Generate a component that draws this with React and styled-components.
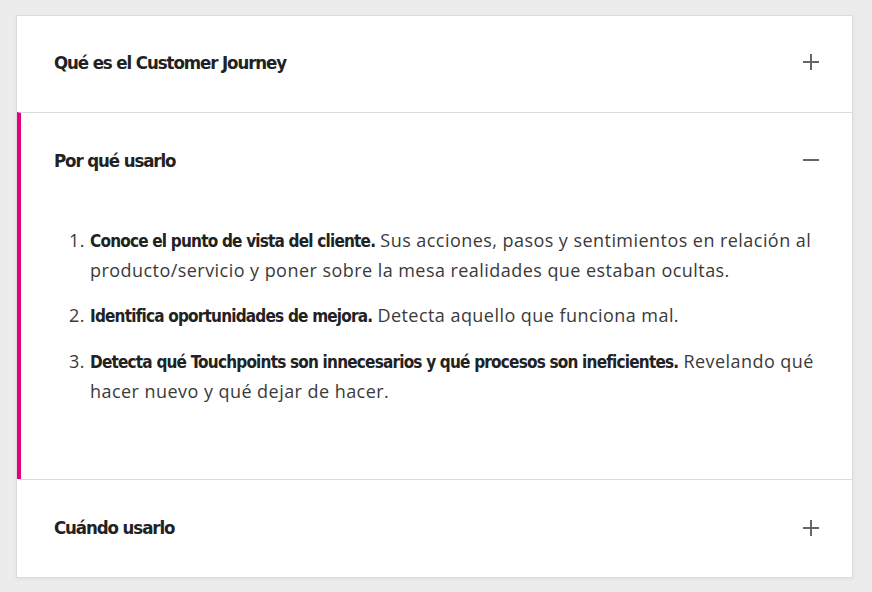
import React, { useState } from 'react';
import styled, { createGlobalStyle } from 'styled-components';

const GlobalStyle = createGlobalStyle`
  html, body {
    margin: 0;
    padding: 0;
    background: #ececec;
  }
  body {
    font-family: "Open Sans", Lato, sans-serif;
  }
`;

const condensed = `"DejaVu Sans Condensed", "Liberation Sans", sans-serif`;

const Page = styled.div`
  padding: 15px 19px 14px 16px;
`;

const Card = styled.div`
  background: #fff;
  border: 1px solid #dcdcdc;
  box-shadow: 0 1px 4px rgba(0, 0, 0, 0.06);
`;

const Item = styled.section`
  border-top: ${(p) => (p.first ? 'none' : '1px solid #dcdcdc')};
  border-left: 4px solid ${(p) => (p.open ? '#e6007e' : 'transparent')};
`;

const Header = styled.button`
  display: flex;
  align-items: center;
  justify-content: space-between;
  width: 100%;
  height: ${(p) => p.height}px;
  padding: 0 32px ${(p) => p.lift}px 33px;
  border: none;
  background: none;
  cursor: pointer;
  text-align: left;
`;

const Title = styled.h3`
  margin: 0;
  font-family: ${condensed};
  font-weight: 700;
  font-size: 18.5px;
  color: #222;
  letter-spacing: -1.1px;
`;

const Icon = styled.svg`
  width: 18px;
  height: 18px;
  flex: none;
`;

const Body = styled.div`
  padding: 19px 32px 73px 33px;
`;

const List = styled.ol`
  margin: 0;
  padding-left: 36px;
  color: #3a3a3a;
  font-size: 18px;
  font-weight: 400;
  letter-spacing: 0.45px;
  line-height: 29px;
`;

const Entry = styled.li`
  margin-bottom: 16px;
  &:last-child {
    margin-bottom: 0;
  }
  strong {
    font-family: ${condensed};
    font-weight: 700;
    font-size: 17px;
    letter-spacing: -0.8px;
    color: #222;
  }
`;

const PlusMinus = ({ open }) => (
  <Icon viewBox="0 0 18 18">
    <rect x="1" y="8" width="16" height="2" fill="#666" />
    {!open && <rect x="8" y="1" width="2" height="16" fill="#666" />}
  </Icon>
);

const items = [
  { title: 'Qué es el Customer Journey', height: 96, lift: 4 },
  { title: 'Por qué usarlo', height: 94, lift: 0 },
  { title: 'Cuándo usarlo', height: 97, lift: 2 },
];

export default function App() {
  const [open, setOpen] = useState(1);
  return (
    <Page>
      <GlobalStyle />
      <Card>
        {items.map((it, i) => (
          <Item key={it.title} first={i === 0} open={open === i}>
            <Header height={it.height} lift={it.lift} onClick={() => setOpen(open === i ? -1 : i)}>
              <Title>{it.title}</Title>
              <PlusMinus open={open === i} />
            </Header>
            {open === i && i === 1 && (
              <Body>
                <List>
                  <Entry>
                    <strong>Conoce el punto de vista del cliente.</strong> Sus acciones, pasos y sentimientos en relación al producto/servicio y poner sobre la mesa realidades que estaban ocultas.
                  </Entry>
                  <Entry>
                    <strong>Identifica oportunidades de mejora.</strong> Detecta aquello que funciona mal.
                  </Entry>
                  <Entry>
                    <strong>Detecta qué Touchpoints son innecesarios y qué procesos son ineficientes.</strong> Revelando qué hacer nuevo y qué dejar de hacer.
                  </Entry>
                </List>
              </Body>
            )}
          </Item>
        ))}
      </Card>
    </Page>
  );
}
